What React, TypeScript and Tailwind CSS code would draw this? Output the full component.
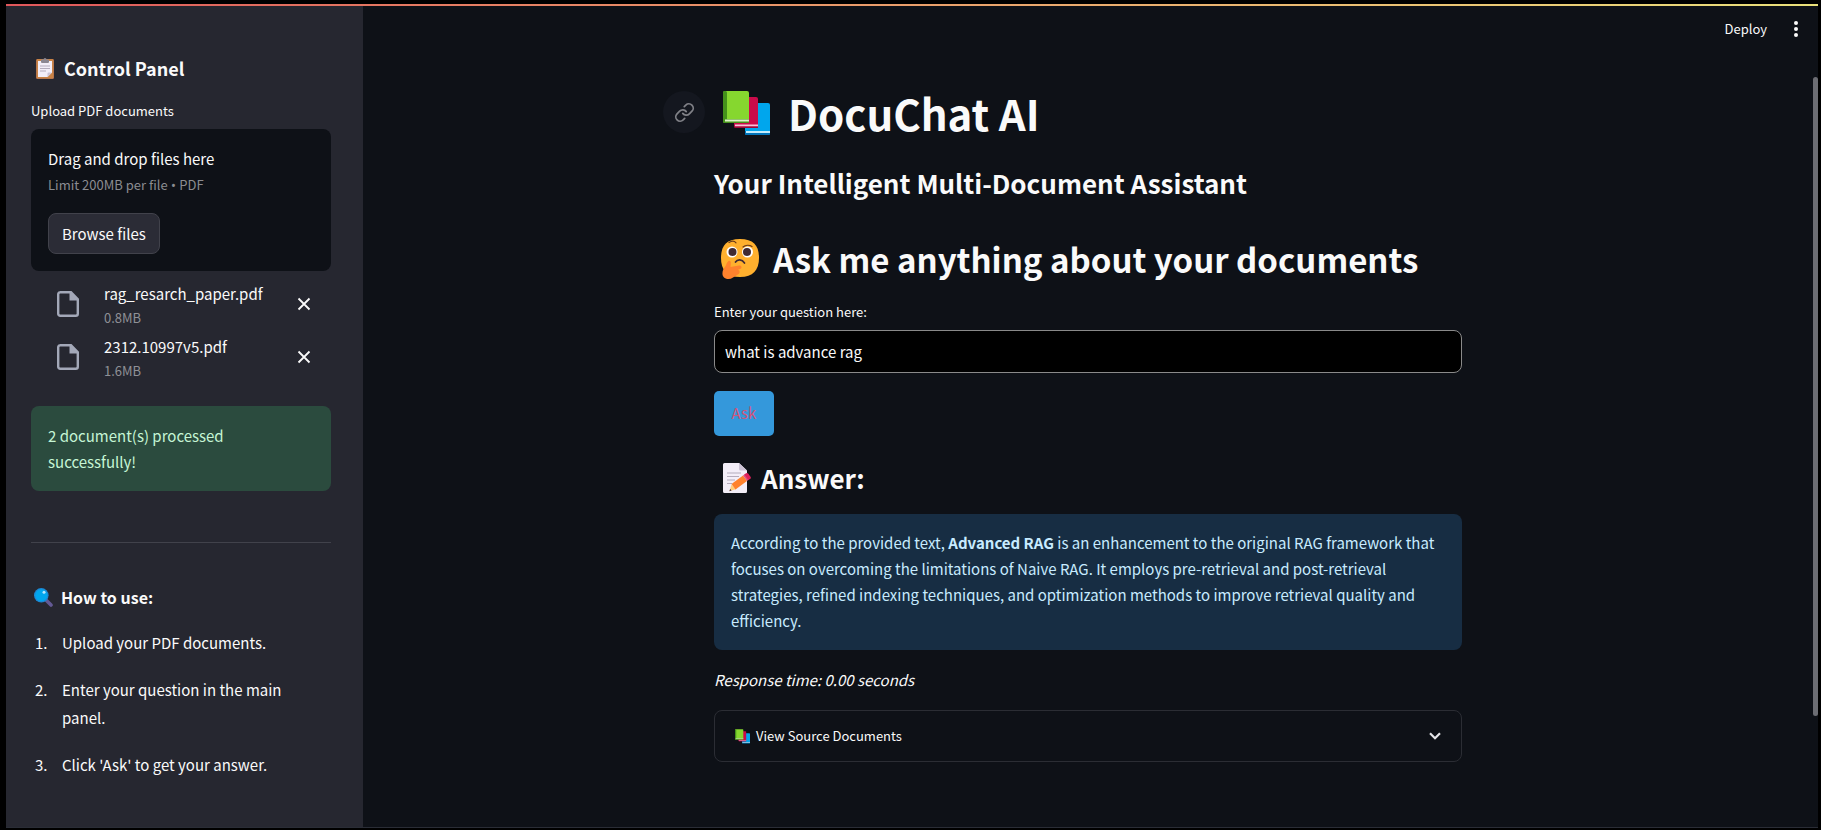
import { useState } from "react";

const files = [
  { name: "rag_resarch_paper.pdf", size: "0.8MB" },
  { name: "2312.10997v5.pdf", size: "1.6MB" },
];

const steps = [
  "Upload your PDF documents.",
  "Enter your question in the main panel.",
  "Click 'Ask' to get your answer.",
];

function Books({ className }: { className: string }) {
  return (
    <svg viewBox="0 0 47 45" className={className} aria-hidden="true">
      <rect x="22" y="12" width="25" height="32" rx="2" fill="#00a6ed" />
      <path d="M22 40h25v3a1 1 0 0 1-1 1H23a1 1 0 0 1-1-1z" fill="#0074ba" />
      <rect x="23" y="40" width="24" height="2" fill="#c3ecfb" />
      <rect x="11" y="6" width="24" height="31" rx="2" fill="#ca0b4a" />
      <rect x="12" y="33.500" width="23" height="2" fill="#f9c2d6" />
      <path d="M11 35.500h24V37H12z" fill="#990838" />
      <rect x="0" y="0" width="26" height="32" rx="2" fill="#86d72f" />
      <rect x="0" y="0" width="4" height="32" rx="1.500" fill="#44911b" />
      <path d="M1 28h25v3a1 1 0 0 1-1 1H2a1 1 0 0 1-1-1z" fill="#44911b" />
      <rect x="2" y="28.500" width="24" height="2" fill="#dff5c8" />
    </svg>
  );
}

function Thinking() {
  return (
    <svg viewBox="0 0 38 40" className="h-10 w-[38px]" aria-hidden="true">
      <path d="M19 0C33 0 38 7 38 19S32 38 19 38 0 31 0 19 5 0 19 0z" fill="#ffb02e" />
      <circle cx="11" cy="13" r="5.500" fill="#fff" />
      <circle cx="26.500" cy="13" r="5.500" fill="#fff" />
      <circle cx="11.500" cy="13" r="4" fill="#402a32" />
      <circle cx="26" cy="13" r="4" fill="#402a32" />
      <path d="M8 3.500c3-2 5.500-1.500 7 .3M22 8c2.500-2 6.500-2 9-.5" stroke="#6b3a1a" strokeWidth="1.200" fill="none" strokeLinecap="round" />
      <path d="M14.500 23c2-3 6.500-3 9 1" stroke="#402a32" strokeWidth="1.700" fill="none" strokeLinecap="round" />
      <path d="M7.500 22c1.500-.6 2.500.6 2.300 2L9.500 28l8.500-1.500c2.800-.4 3.500 2.700 1 3.500l-2 .7c2.500.8 2 4-.5 5-3 1.800-6 4.300-9 4.300-4 0-6.500-2.500-6-6.500C2 29 5 28 5.800 24z" fill="#ff822d" />
    </svg>
  );
}

function Clipboard() {
  return (
    <svg viewBox="0 0 18 21" className="h-[21px] w-[18px]" aria-hidden="true">
      <rect x="0" y="1" width="18" height="20" rx="1.500" fill="#a56953" />
      <rect x="0.500" y="1" width="17" height="19.500" rx="1" fill="#c98345" />
      <path d="M2 3h14v11.500L11.500 19H2z" fill="#f3eef8" />
      <path d="M16 14.500h-3.500a1 1 0 0 0-1 1V19z" fill="#cdc4d6" />
      <path d="M4 8h10M4 10.500h10M4 13h6" stroke="#b4acbc" strokeWidth="1" />
      <path d="M5 1.500h2.500a1.500 1.500 0 0 1 3 0H13V4a1 1 0 0 1-1 1H6a1 1 0 0 1-1-1z" fill="#8b8792" />
    </svg>
  );
}

function Magnifier() {
  return (
    <svg viewBox="0 0 19 19" className="size-[19px]" aria-hidden="true">
      <path d="M11.500 11.500l5.500 5.500" stroke="#635994" strokeWidth="3.600" strokeLinecap="round" />
      <circle cx="7.300" cy="7.300" r="7.300" fill="#1c88d4" />
      <circle cx="7.300" cy="7.300" r="6" fill="#00a6ed" />
      <circle cx="10" cy="4.200" r="1.500" fill="#b5e8ff" />
    </svg>
  );
}

function Memo() {
  return (
    <svg viewBox="0 0 28 30" className="h-[30px] w-7" aria-hidden="true">
      <path d="M1.500 0H16l8 7.500V28.500a1.500 1.500 0 0 1-1.500 1.500h-21A1.500 1.500 0 0 1 0 28.500v-27A1.500 1.500 0 0 1 1.500 0z" fill="#f3eef8" />
      <path d="M16 0l8 7.500h-6.500A1.500 1.500 0 0 1 16 6z" fill="#cdc4d6" />
      <path d="M4 10h14M4 13.500h12M4 17h8M4 20.500h5" stroke="#b4acbc" strokeWidth="1.100" />
      <path d="M8.500 21.500l-2 6.500 6.500-1.800z" fill="#ffce7c" />
      <path d="M7.200 26l-.9 2.300 2.300-.8z" fill="#402a32" />
      <path d="M20 12.500l4 5.500-11.500 8.500-4-5.500z" fill="#ff822d" />
      <path d="M20 12.500l2-1.500 4 5.500-2 1.500z" fill="#e0557e" />
      <path d="M21.300 11.500l1.700-1.200a1.700 1.700 0 0 1 2.300.4l2.200 3a1.700 1.700 0 0 1-.4 2.300L25.300 17z" fill="#e0215a" />
    </svg>
  );
}

function Sidebar() {
  return (
    <aside className="flex w-[357px] shrink-0 flex-col bg-[#262730] pt-[50px] pr-8 pl-[25px]">
      <h2 className="flex h-6 items-center gap-[10px] pl-[5px] text-[18px] leading-6 font-bold">
        <Clipboard />
        Control Panel
      </h2>
      <label htmlFor="pdfs" className="mt-[21px] text-[13px] leading-5">
        Upload PDF documents
      </label>
      <section className="mt-2 rounded-lg bg-[#0e1117] px-[17px] pt-[18px] pb-[17px]">
        <p className="text-[15px] leading-6">Drag and drop files here</p>
        <p className="mt-1 text-[13px] leading-5 text-[#8b8c91]">
          Limit 200MB per file<span className="font-['Noto_Sans',sans-serif]"> • </span>PDF
        </p>
        <button id="pdfs" type="button" className="mt-[18px] h-[41px] rounded-lg border border-[#41424b] bg-[#2b2c36] px-[13px] text-[15px] leading-6">
          Browse files
        </button>
      </section>
      <ul className="mt-[6px] pr-[20px] pl-[26px]">
        {files.map((file) => (
          <li key={file.name} className="flex h-[53px] items-center">
            <svg viewBox="0 0 22 26" className="h-[26px] w-[22px] shrink-0" aria-hidden="true">
              <path d="M3 1.200h11l6.800 7v14.600a2 2 0 0 1-2 2H3.200a2 2 0 0 1-2-2V3.200a2 2 0 0 1 2-2z" fill="none" stroke="#a3a8b8" strokeWidth="2.400" />
              <path d="M12.500 1H14l7 7v1.500h-8.500z" fill="#a3a8b8" />
            </svg>
            <div className="ml-[25px] flex-1">
              <p className="text-[15px] leading-7">{file.name}</p>
              <p className="text-[13px] leading-5 text-[#8f9096]">{file.size}</p>
            </div>
            <button type="button" aria-label={`Remove ${file.name}`} className="flex size-[14px] items-center justify-center">
              <svg viewBox="0 0 14 14" className="size-[14px]" aria-hidden="true">
                <path d="M1.500 1.500l11 11M12.500 1.500l-11 11" stroke="#fafafa" strokeWidth="1.800" />
              </svg>
            </button>
          </li>
        ))}
      </ul>
      <p role="status" className="mt-[23px] rounded-lg bg-[#2b4b3e] px-[17px] pt-[17px] pb-4 text-[15px] leading-[26px] text-[#c5f5d5]">
        2 document(s) processed successfully!
      </p>
      <hr className="mt-[51px] border-[#41424b]" />
      <h3 className="mt-[40px] flex h-7 items-center gap-[8px] pl-[3px] text-[16px] font-bold">
        <Magnifier />
        How to use:
      </h3>
      <ol className="mt-[18px] flex flex-col gap-[19px] pr-6 pb-12 text-[15px] leading-7">
        {steps.map((step, i) => (
          <li key={step} className="flex">
            <span className="w-[31px] shrink-0 pl-[4px]">{i + 1}.</span>
            <span>{step}</span>
          </li>
        ))}
      </ol>
    </aside>
  );
}

export default function App() {
  const [question, setQuestion] = useState("what is advance rag");
  return (
    <div className="flex min-h-screen flex-col bg-black pt-1 pr-[3px] pb-[3px] pl-[6px] font-['Noto_Sans_CJK_SC',sans-serif] text-[#fafafa]">
      <div className="h-[2px] bg-linear-to-r from-[#e0575b] to-[#e9e07a]" />
      <div className="flex grow border-b border-[#2a2d36]">
        <Sidebar />
        <div className="flex min-w-0 grow flex-col bg-[#0e1117]">
          <header className="flex h-[46px] items-center justify-end gap-[26px] pr-[19px]">
            <button type="button" className="text-[13px] leading-5">Deploy</button>
            <button type="button" aria-label="Menu" className="flex h-6 w-[6px] items-center justify-center">
              <svg viewBox="0 0 4 16" className="h-4 w-1" fill="#fafafa" aria-hidden="true">
                <circle cx="2" cy="2" r="2" />
                <circle cx="2" cy="8" r="2" />
                <circle cx="2" cy="14" r="2" />
              </svg>
            </button>
          </header>
          <main className="mr-[5px] flex flex-col items-center px-14 pt-[33px] pb-16">
            <div className="flex w-full max-w-[748px] flex-col">
              <h1 className="relative flex h-14 items-center gap-[18px] pl-[9px] text-[42px] leading-14 font-bold">
                <a href="#docuchat-ai" aria-label="Link to heading" className="absolute top-[6px] right-full mr-[9px] flex size-[42px] items-center justify-center rounded-full bg-[#14171f]">
                  <svg viewBox="0 0 24 24" className="size-[21px]" fill="none" stroke="#808187" strokeWidth="2" strokeLinecap="round" strokeLinejoin="round" aria-hidden="true">
                    <path d="M10 13a5 5 0 0 0 7.540.540l3-3a5 5 0 0 0-7.070-7.070l-1.720 1.710" />
                    <path d="M14 11a5 5 0 0 0-7.540-.540l-3 3a5 5 0 0 0 7.070 7.070l1.710-1.710" />
                  </svg>
                </a>
                <Books className="h-[45px] w-[47px]" />
                DocuChat AI
              </h1>
              <h3 className="mt-6 text-[26px] leading-9 font-bold">Your Intelligent Multi-Document Assistant</h3>
              <h2 className="mt-[34px] flex h-12 items-center gap-[14px] pl-[7px] text-[33px] leading-12 font-bold">
                <Thinking />
                Ask me anything about your documents
              </h2>
              <label htmlFor="question" className="mt-[17px] text-[13px] leading-6">
                Enter your question here:
              </label>
              <input
                id="question"
                value={question}
                onChange={(e) => setQuestion(e.target.value)}
                className="mt-[6px] h-[43px] rounded-lg border border-[#8a8a8a] bg-black px-[10px] text-[15px] outline-none"
              />
              <button type="button" className="mt-[18px] h-[45px] w-[60px] rounded-[5px] bg-[#3498db] text-[15px] text-[#d0557a]">
                Ask
              </button>
              <h3 className="mt-[24px] flex h-9 items-center gap-[10px] pl-[9px] text-[26px] leading-9 font-bold">
                <Memo />
                Answer:
              </h3>
              <div className="mt-[18px] rounded-lg bg-[#172d43] px-[17px] py-4 text-[15px] leading-[26px] text-[#c7ebff]">
                According to the provided text, <strong className="font-bold">Advanced RAG</strong> is an enhancement to the original RAG framework that focuses on overcoming the limitations of Naive RAG. It employs pre-retrieval and post-retrieval strategies, refined indexing techniques, and optimization methods to improve retrieval quality and efficiency.
              </div>
              <p className="mt-4 text-[15px] leading-7 italic">Response time: 0.00 seconds</p>
              <button type="button" className="mt-4 flex h-[52px] items-center rounded-lg border border-[#2b2d34] pr-5 pl-5 text-[13px]">
                <Books className="mr-[6px] h-[15px] w-[15px]" />
                View Source Documents
                <svg viewBox="0 0 12 8" className="ml-auto h-2 w-3" fill="none" stroke="#e4e5e8" strokeWidth="2.200" aria-hidden="true">
                  <path d="M1 1.300l5 5 5-5" />
                </svg>
              </button>
            </div>
          </main>
        </div>
      </div>
      <div className="absolute top-[77px] right-[3px] h-[639px] w-[5px] rounded-full bg-[#6c6d73]" />
    </div>
  );
}
